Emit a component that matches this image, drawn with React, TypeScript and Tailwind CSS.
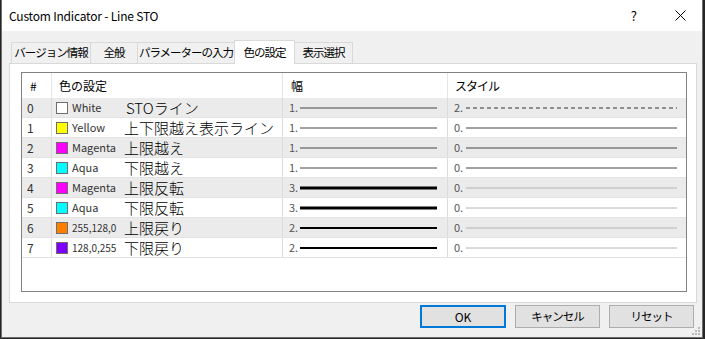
import React from 'react';

type Row = {
  id: number;
  swatch: string;
  name: string;
  label: string;
  width: number;
  style: number;
};

const rows: Row[] = [
  { id: 0, swatch: '#ffffff', name: 'White', label: 'STOライン', width: 1, style: 2 },
  { id: 1, swatch: '#ffff00', name: 'Yellow', label: '上下限越え表示ライン', width: 1, style: 0 },
  { id: 2, swatch: '#ff00ff', name: 'Magenta', label: '上限越え', width: 1, style: 0 },
  { id: 3, swatch: '#00ffff', name: 'Aqua', label: '下限越え', width: 1, style: 0 },
  { id: 4, swatch: '#ff00ff', name: 'Magenta', label: '上限反転', width: 3, style: 0 },
  { id: 5, swatch: '#00ffff', name: 'Aqua', label: '下限反転', width: 3, style: 0 },
  { id: 6, swatch: '#ff8000', name: '255,128,0', label: '上限戻り', width: 2, style: 0 },
  { id: 7, swatch: '#8000ff', name: '128,0,255', label: '下限戻り', width: 2, style: 0 },
];

// tab captions with their widths in the strip
const tabs: { label: string; w: string }[] = [
  { label: 'バージョン情報', w: 'w-[80px]' },
  { label: '全般', w: 'w-[48px]' },
  { label: 'パラメーターの入力', w: 'w-[98px]' },
  { label: '色の設定', w: 'w-[61px]' },
  { label: '表示選択', w: 'w-[59px]' },
];

function WidthLine({ w }: { w: number }) {
  const color = w === 1 ? '#444444' : '#000000';
  return (
    <svg width="137" height="6" className="shrink-0">
      <line x1="0" y1="3" x2="137" y2="3" stroke={color} strokeWidth={w} />
    </svg>
  );
}

function StyleLine({ s, dark }: { s: number; dark: boolean }) {
  return (
    <svg width="211" height="4" className="shrink-0">
      {s === 2 ? (
        <line x1="0" y1="2" x2="211" y2="2" stroke="#333333" strokeWidth="1" strokeDasharray="4 3" />
      ) : (
        <line x1="0" y1="2" x2="211" y2="2" stroke={dark ? '#444444' : '#b4b4b4'} strokeWidth="1" />
      )}
    </svg>
  );
}

export default function App() {
  return (
    <div
      className="w-[705px] h-[339px] bg-[#262626] overflow-hidden"
      style={{ fontFamily: '"Noto Sans CJK JP", "Noto Sans", sans-serif' }}
    >
      <div className="relative ml-[1px] w-[702px] h-[338px] border border-t-0 border-[#6e6e6e] bg-[#f0f0f0] flex flex-col">
        {/* Title bar */}
        <div className="h-[31px] bg-white flex items-center shrink-0">
          <span className="pl-[7px] text-[12px] tracking-[-0.2px] text-black">Custom Indicator - Line STO</span>
          <span className="ml-auto text-[13px] text-black mr-[38px]">?</span>
          <svg width="11" height="11" className="mr-[16px]">
            <path d="M0.5 0.5 L10.5 10.5 M10.5 0.5 L0.5 10.5" stroke="#000" strokeWidth="1" />
          </svg>
        </div>

        {/* Tabs */}
        <div className="flex items-end h-[32px] pl-[9px] shrink-0 relative z-10">
          {tabs.map((t, i) => {
            const active = i === 3;
            return (
              <div
                key={t.label}
                className={
                  active
                    ? `${t.w} h-[24px] -mb-px -ml-px bg-white border border-b-0 border-[#d9d9d9] flex items-center justify-center text-[11.5px] tracking-[-1px] whitespace-nowrap text-black`
                    : `${t.w} h-[21px] border border-b-0 border-[#d9d9d9] -ml-px first:ml-0 flex items-center justify-center text-[11.5px] tracking-[-1px] whitespace-nowrap text-black bg-[#f0f0f0]`
                }
              >
                {t.label}
              </div>
            );
          })}
        </div>

        {/* Panel */}
        <div className="ml-[7px] w-[688px] h-[240px] bg-white border border-[#d9d9d9] shrink-0 pt-[8px] pl-[11px]">
          <div className="w-[666px] h-[220px] border border-[#828282] bg-white text-black">
            {/* Header */}
            <div className="flex h-[25px] items-center text-[12px]">
              <div className="w-[30px] h-full border-r border-[#e5e5e5] flex items-center pl-[8px]">#</div>
              <div className="w-[231px] h-full border-r border-[#e5e5e5] flex items-center pl-[7px]">色の設定</div>
              <div className="w-[165px] h-full border-r border-[#e5e5e5] flex items-center pl-[8px]">幅</div>
              <div className="flex-1 h-full flex items-center pl-[7px] tracking-[-1px]">スタイル</div>
            </div>
            {rows.map((r) => {
              const shaded = r.id % 2 === 0;
              return (
                <div
                  key={r.id}
                  className={`flex h-[20px] items-center border-b border-[#e3e3e3] ${shaded ? 'bg-[#ebebeb]' : 'bg-white'}`}
                >
                  <div className="w-[30px] h-full border-r border-[#dcdcdc] flex items-center pl-[5px] text-[12px] text-[#333]">
                    {r.id}
                  </div>
                  <div className="w-[231px] h-full border-r border-[#dcdcdc] flex items-center pl-[4px] whitespace-nowrap">
                    <span
                      className="w-[12px] h-[12px] border border-[#6e6e6e] shrink-0"
                      style={{ backgroundColor: r.swatch }}
                    />
                    <span className={`ml-[4px] w-[52px] shrink-0 text-[#333] ${r.name.includes(',') ? 'text-[10px]' : 'text-[11px]'}`}>
                      {r.name}
                    </span>
                    <span className={`text-[15px] font-light leading-none text-black ${r.id === 0 ? 'ml-[2px]' : ''}`}>{r.label}</span>
                  </div>
                  <div className="w-[165px] h-full border-r border-[#dcdcdc] flex items-center pl-[6px] gap-[3px]">
                    <span className="text-[11px] text-[#555] w-[8px]">{r.width}.</span>
                    <WidthLine w={r.width} />
                  </div>
                  <div className="flex-1 h-full flex items-center pl-[6px] gap-[3px]">
                    <span className="text-[11px] text-[#555] w-[9px]">{r.style}.</span>
                    <StyleLine s={r.style} dark={r.id >= 1 && r.id <= 3} />
                  </div>
                </div>
              );
            })}
          </div>
        </div>

        {/* Buttons */}
        <div className="flex justify-end gap-[9px] pr-[8px] mt-[2px]">
          <button className="w-[86px] h-[23px] bg-[#e1e1e1] border-2 border-[#0078d7] text-[12px] text-black">OK</button>
          <button className="w-[85px] h-[23px] bg-[#e1e1e1] border border-[#adadad] text-[11.5px] tracking-[-1px] text-black">キャンセル</button>
          <button className="w-[85px] h-[23px] bg-[#e1e1e1] border border-[#adadad] text-[11.5px] tracking-[-1px] text-black">リセット</button>
        </div>

        {/* Resize grip */}
        <svg width="8" height="8" className="absolute right-[2px] bottom-[2px]">
          <rect x="6" y="0" width="2" height="2" fill="#b8b8b8" />
          <rect x="3" y="3" width="2" height="2" fill="#b8b8b8" />
          <rect x="6" y="3" width="2" height="2" fill="#b8b8b8" />
          <rect x="0" y="6" width="2" height="2" fill="#b8b8b8" />
          <rect x="3" y="6" width="2" height="2" fill="#b8b8b8" />
          <rect x="6" y="6" width="2" height="2" fill="#b8b8b8" />
        </svg>
      </div>
    </div>
  );
}
